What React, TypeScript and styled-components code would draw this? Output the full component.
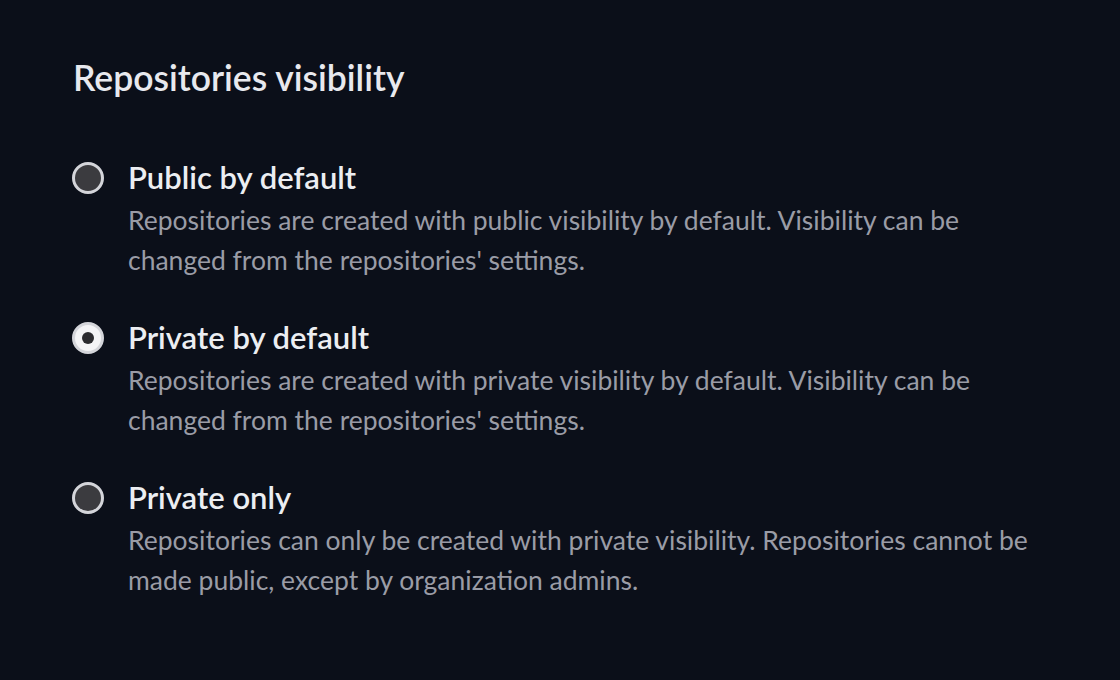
import React from "react";
import styled, { createGlobalStyle } from "styled-components";

const GlobalStyle = createGlobalStyle`
  html, body {
    margin: 0;
    padding: 0;
    background: #0b0f19;
  }
  body {
    font-family: "Lato", "Noto Sans", sans-serif;
  }
`;

const Page = styled.div`
  width: 1120px;
  height: 680px;
  box-sizing: border-box;
  padding: 56px 73px 0 73px;
  background: #0b0f19;
`;

const Heading = styled.h2`
  margin: 0 0 57px 0;
  font-size: 35.5px;
  line-height: 44px;
  font-weight: 600;
  color: #e8e9ee;
`;

const OptionList = styled.div`
  display: flex;
  flex-direction: column;
  gap: 37px;
`;

const Option = styled.label`
  display: flex;
  align-items: flex-start;
  gap: 24px;
  cursor: pointer;
`;

const Radio = styled.span<{ $checked: boolean }>`
  flex: none;
  width: 32px;
  height: 32px;
  margin: 5px 0 0 -1px;
  box-sizing: border-box;
  border-radius: 50%;
  border: 3px solid #d4d5da;
  background: ${(p) => (p.$checked ? "#f4f4f6" : "#3b3b3f")};
  display: flex;
  align-items: center;
  justify-content: center;

  &::after {
    content: "";
    display: ${(p) => (p.$checked ? "block" : "none")};
    width: 12px;
    height: 12px;
    border-radius: 50%;
    background: #2b2b2f;
  }
`;

const Texts = styled.div`
  display: flex;
  flex-direction: column;
`;

const Title = styled.div`
  font-size: 31px;
  line-height: 40px;
  font-weight: 600;
  color: #eceef2;
`;

const Description = styled.div`
  margin-top: 3px;
  font-size: 26.5px;
  line-height: 40px;
  color: #9a9ca6;
  max-width: 912px;
`;

const options = [
  {
    title: "Public by default",
    description:
      "Repositories are created with public visibility by default. Visibility can be changed from the repositories' settings.",
    checked: false,
  },
  {
    title: "Private by default",
    description:
      "Repositories are created with private visibility by default. Visibility can be changed from the repositories' settings.",
    checked: true,
  },
  {
    title: "Private only",
    description:
      "Repositories can only be created with private visibility. Repositories cannot be made public, except by organization admins.",
    checked: false,
  },
];

export default function App() {
  return (
    <>
      <GlobalStyle />
      <Page>
        <Heading>Repositories visibility</Heading>
        <OptionList>
          {options.map((o) => (
            <Option key={o.title}>
              <Radio $checked={o.checked} />
              <Texts>
                <Title>{o.title}</Title>
                <Description>{o.description}</Description>
              </Texts>
            </Option>
          ))}
        </OptionList>
      </Page>
    </>
  );
}
